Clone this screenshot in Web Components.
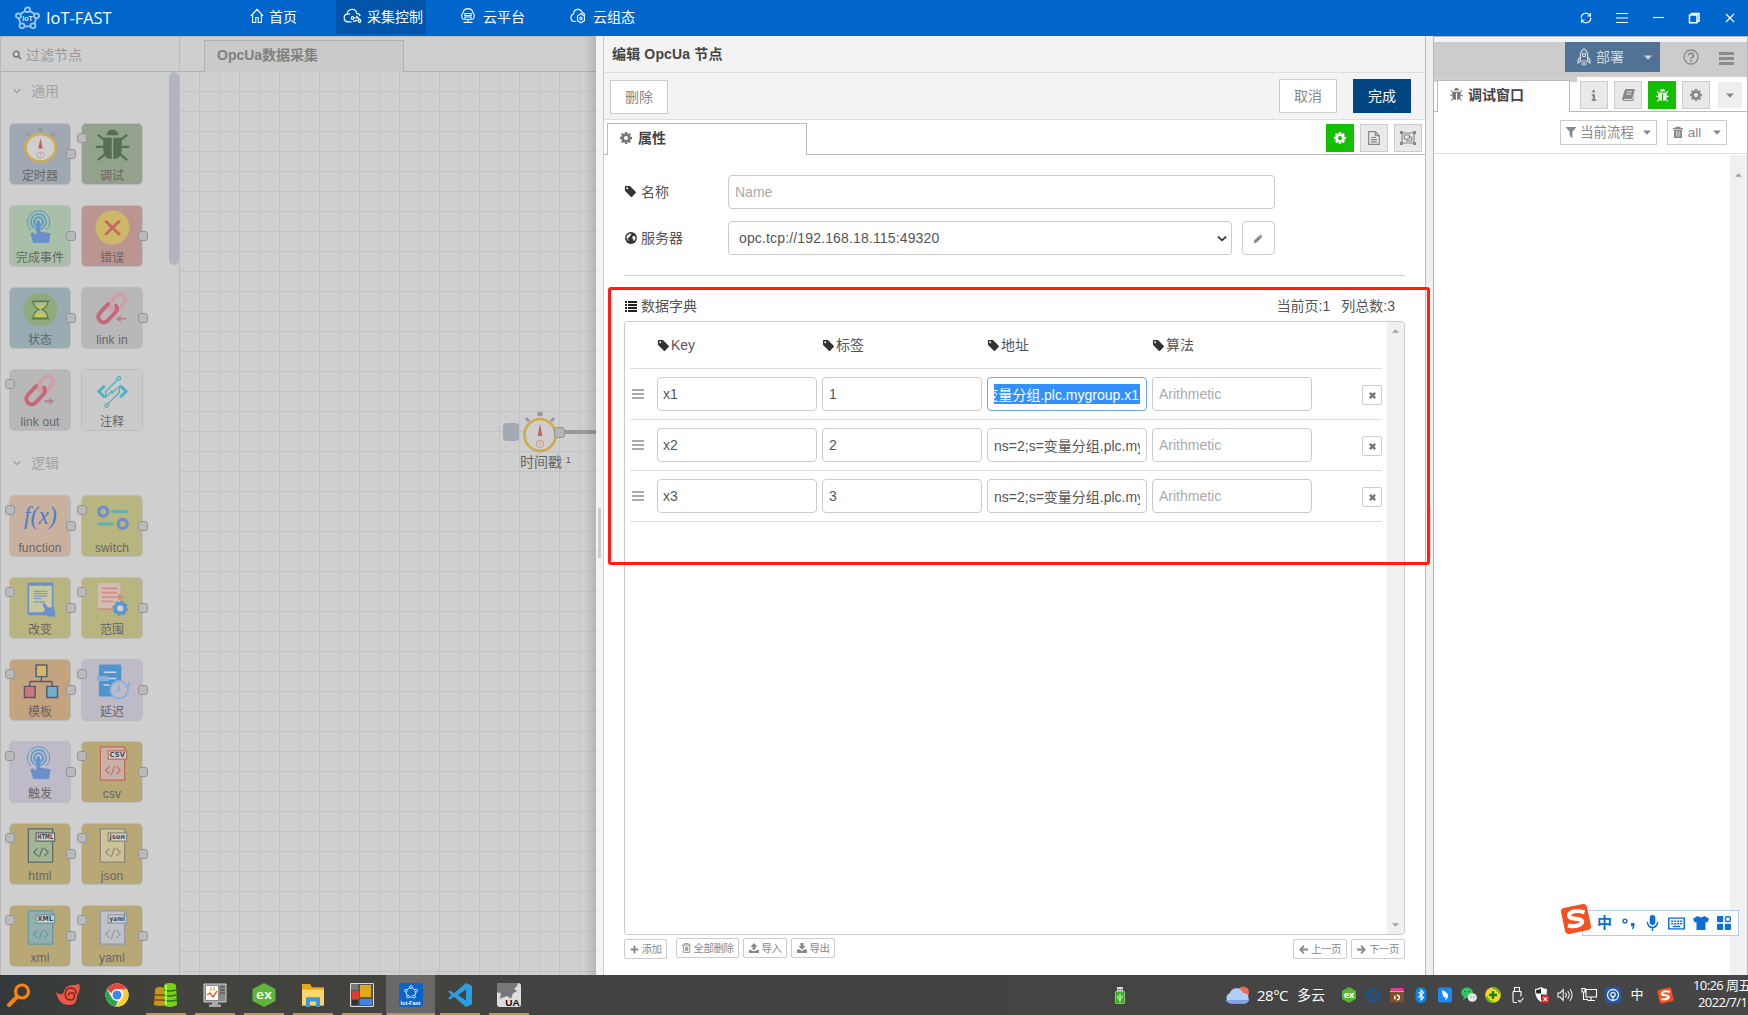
<!DOCTYPE html>
<html lang="zh-CN">
<head>
<meta charset="utf-8">
<title>IoT-FAST</title>
<style>
html,body{margin:0;padding:0}
body{width:1748px;height:1015px;overflow:hidden;background:#fff;font-family:"Liberation Sans","Noto Sans CJK SC",sans-serif;font-size:14px;line-height:20px;color:#555}
</style>
</head>
<body>
<iot-app></iot-app>
<script>
const ICONS = {
  tag:['0 0 1792 1792','<path fill="currentColor" d="M576 448q0-53-37.5-90.5t-90.5-37.5-90.5 37.5-37.5 90.5 37.5 90.5 90.5 37.5 90.5-37.5 37.5-90.5zm1067 576q0 53-37 90l-491 492q-39 37-91 37-53 0-90-37l-715-716q-38-37-64.5-101t-26.5-117v-416q0-52 38-90t90-38h416q53 0 117 26.5t102 64.5l715 714q37 39 37 91z"/>'],
  cog:['128 128 1536 1536','<path fill="currentColor" d="M1152 896q0-106-75-181t-181-75-181 75-75 181 75 181 181 75 181-75 75-181zm512-109v222q0 12-8 23t-20 13l-185 28q-19 54-39 91 35 50 107 138 10 12 10 25t-9 23q-27 37-99 108t-94 71q-12 0-26-9l-138-108q-44 23-91 38-16 136-29 186-7 28-36 28h-222q-14 0-24.5-8.5t-11.5-21.5l-28-184q-49-16-90-37l-141 107q-10 9-25 9-14 0-25-11-126-114-165-168-7-10-7-23 0-12 8-23 15-21 51-66.5t54-70.5q-27-50-41-99l-183-27q-13-2-21-12.5t-8-23.5v-222q0-12 8-23t19-13l186-28q14-46 39-92-40-57-107-138-10-12-10-24 0-10 9-23 26-36 98.5-107.5t94.5-71.5q13 0 26 10l138 107q44-23 91-38 16-136 29-186 7-28 36-28h222q14 0 24.5 8.5t11.5 21.5l28 184q49 16 90 37l142-107q9-9 24-9 13 0 25 10 129 119 165 170 7 8 7 22 0 12-8 23-15 21-51 66.5t-54 70.5q26 50 41 98l183 28q13 2 21 12.5t8 23.5z"/>'],
  bug:['96 64 1600 1600','<path fill="currentColor" d="M1696 960q0 26-19 45t-45 19h-224q0 171-67 290l208 209q19 19 19 45t-19 45q-18 19-45 19t-45-19l-198-197q-5 5-15 13t-42 28.5-65 36.5-82 29-97 13v-896h-128v896q-51 0-101.5-13.5t-87-33-66-39-43.5-32.5l-15-14-183 207q-20 21-48 21-24 0-43-16-19-18-20.5-44.5t15.5-46.5l202-227q-58-114-58-274h-224q-26 0-45-19t-19-45 19-45 45-19h224v-294l-173-173q-19-19-19-45t19-45 45-19 45 19l173 173h844l173-173q19-19 45-19t45 19 19 45-19 45l-173 173v294h224q26 0 45 19t19 45zm-480-576h-640q0-133 93.5-226.5t226.5-93.5 226.5 93.5 93.5 226.5z"/>'],
  filter:['192 256 1408 1408','<path fill="currentColor" d="M1595 295q17 41-14 70l-493 493v742q0 42-39 59-13 5-25 5-27 0-45-19l-256-256q-19-19-19-45v-486l-493-493q-31-29-14-70 17-39 59-39h1280q42 0 59 39z"/>'],
  search:['0 0 12 12','<circle cx="5" cy="5" r="3.4" fill="none" stroke="currentColor" stroke-width="1.8"/><path d="M7.5 7.5 11 11" stroke="currentColor" stroke-width="2"/>'],
  chev:['0 0 8 8','<path d="M.7 2.3 4 5.6 7.3 2.3" fill="none" stroke="currentColor" stroke-width="1.4"/>'],
  caret:['0 0 10 6','<path d="M0 .5h10L5 5.8z" fill="currentColor"/>'],
  caretup:['0 0 10 6','<path d="M0 5.5h10L5 .2z" fill="currentColor"/>'],
  logo:['0 0 26 26','<g fill="none" stroke="#9cc8f5" stroke-width="1.9"><circle cx="13" cy="4" r="2.6"/><circle cx="3.6" cy="10.6" r="2.6"/><circle cx="22.4" cy="10.6" r="2.6"/><circle cx="7.3" cy="21.5" r="2.6"/><circle cx="18.7" cy="21.5" r="2.6"/><path d="M10.6 5.4 5.6 8.7M15.4 5.4l5 3.3M3.8 13.3l2 5.8M22.2 13.3l-2 5.8M10 22.2h6"/></g><text x="13" y="16.3" font-family="Liberation Sans" font-weight="700" font-size="7.4" text-anchor="middle" fill="#d9ecff">IoT</text>'],
  home:['0 0 16 16','<path d="M1 8 8 1.3 15 8M3 6.5v8h3.6v-5h2.8v5H13v-8" fill="none" stroke="currentColor" stroke-width="1.2"/>'],
  cloudlink:['0 0 20 16','<g fill="none" stroke="currentColor" stroke-width="1.2"><path d="M9 13.8H5a4 4 0 0 1-.6-7.9 5.2 5.2 0 0 1 10.200-.6A3.500 3.500 0 0 1 18 8"/><path d="M4.500 6h3"/><circle cx="10" cy="10" r="1.300"/><path d="M11.500 10h4M14 7.800l4 4M10.500 13.400l5-1"/><circle cx="17.500" cy="13" r="1.300"/></g>'],
  cloudsrv:['0 0 18 16','<g fill="none" stroke="currentColor" stroke-width="1.2"><path d="M4 11.500A4 4 0 0 1 3.200 5 6 6 0 0 1 14.800 5a4 4 0 0 1-.8 6.500"/><path d="M5.500 5.500h7v2h-7zM5.500 9h7v2.500h-7zM9 11.500v2M4 14.300h10"/></g>'],
  cloudcfg:['0 0 18 16','<g fill="none" stroke="currentColor" stroke-width="1.2"><path d="M7 13.500H4.500A3.800 3.800 0 0 1 4 6a5 5 0 0 1 9.700-1.300 3.600 3.600 0 0 1 3 3"/><path d="M12.300 5.800 16.200 8v4.600l-3.900 2.200-3.900-2.200V8z"/><circle cx="12.300" cy="10.300" r="1.300"/></g>'],
  refresh:['0 0 12 12','<path d="M1.300 6.500A4.700 4.700 0 0 1 10 3.500M10.700 5.500A4.700 4.700 0 0 1 2 8.500M10.500 1v3h-3M1.500 11V8h3" fill="none" stroke="currentColor" stroke-width="1.100"/>'],
  menu:['0 0 12 12','<path d="M0 1.500h12M0 6h12M0 10.500h12" stroke="currentColor" stroke-width="1.100"/>'],
  min:['0 0 12 12','<path d="M1 5.500h11" stroke="currentColor" stroke-width="1.100"/>'],
  max:['0 0 12 12','<path d="M1.500 3h7.500v7.800H1.500zM3.500 3V1.500h7.500v7.800H9.500" fill="none" stroke="currentColor" stroke-width="1.500"/>'],
  close:['0 0 12 12','<path d="m2 2 8 8M10 2l-8 8" stroke="currentColor" stroke-width="1.100"/>'],
  globe:['0 0 12 12','<circle cx="6" cy="6" r="5.900" fill="currentColor"/><path d="M4.500 1.800 6.500 1.600 6 3 4.800 4l-.3 1.300-1.600.6-.5 1 1.300.8.2 1.500-1.400-1.400L1.400 6l.8-2.500zM8.300 4l1.700.2.600 2.300-1.200 2.200-.8.200-.3-1.700-1-.8.200-1.800z" fill="#fff"/>'],
  list:['0 0 12 11','<path d="M0 1h2M0 4h2M0 7h2M0 10h2M3 1h9M3 4h9M3 7h9M3 10h9" stroke="currentColor" stroke-width="1.900"/>'],
  handle:['0 0 12 10','<path d="M0 1h12M0 5h12M0 9h12" stroke="currentColor" stroke-width="2"/>'],
  bars:['0 0 15 13','<path d="M0 1.500h15M0 6.500h15M0 11.500h15" stroke="currentColor" stroke-width="3"/>'],
  x:['0 0 8 8','<path d="m1 1 6 6M7 1 1 7" stroke="currentColor" stroke-width="2.800"/>'],
  pencil:['0 0 12 12','<path d="M.8 11.200 1.600 8 8 1.600 10.400 4 4 10.400z" fill="currentColor"/><path d="m7 3 2.300 2.300" stroke="#fff" stroke-width=".7"/>'],
  file:['0 0 12 14','<path d="M.7.700h6.600l4 4v8.600H.7zM7.300.700v4h4M3 6.500h5M3 8.700h6M3 10.900h6" fill="none" stroke="currentColor" stroke-width="1.200"/>'],
  group:['0 0 16 14','<g fill="none" stroke="currentColor" stroke-width="1.200"><path d="M2 2h12v10H2zM4.300 4h5v4h-5z"/><path d="M9.300 6h2.400v4H7V8"/></g><path d="M0 0h3v3H0zM13 0h3v3h-3zM0 11h3v3H0zM13 11h3v3h-3z" fill="currentColor"/>'],
  info:['0 0 8 12','<path d="M2 0h3v3H2zM1 4.500h4.300V10H7v2H1v-2h1.300V6.500H1z" fill="currentColor"/>'],
  book:['0 0 14 12','<path d="M4.500 0h8.300q1.200.3.900 1.500L11.300 9q-.4 1-1.300 1H2.500q-.7.300-.3.900h8.600q1 0 1.300-.8l1.700-5.600-1.300 7q-.4.500-1.300.5H2Q-.2 11.500.3 9L3 1Q3.500 0 4.500 0z" fill="currentColor"/><path d="M5.300 2.700h5.500M4.600 5h5.500" stroke="#eee" stroke-width=".9"/>'],
  question:['0 0 16 16','<circle cx="8" cy="8" r="7" fill="none" stroke="currentColor" stroke-width="1.300"/><path d="M5.600 6.500a2.400 2.300 0 1 1 3.600 2q-1.200.6-1.200 1.500" fill="none" stroke="currentColor" stroke-width="1.900"/><path d="M7 11h2v1.800H7z" fill="currentColor"/>'],
  rocket:['0 0 14 18','<g fill="none" stroke="currentColor" stroke-width="1.200"><path d="M7 1q4 2.500 3.600 7.500v4.500H3.400V8.500Q3 3.500 7 1z"/><circle cx="7" cy="7" r="1.700"/><path d="M3.400 8.500 1 12v3l2.400-2M10.600 8.500 13 12v3l-2.400-2M5 14.500V17M7 14v4M9 14.500V17"/></g>'],
  trash:['0 0 10 12','<path d="M0 1.800h10M3 1.500V.5h4v1" stroke="currentColor" stroke-width="1.300" fill="none"/><path d="M1 3h8v9H1z" fill="currentColor"/><path d="M3.500 4.500v6M5 4.500v6M6.700 4.500v6" stroke="#fff" stroke-width=".6"/>'],
  trasho:['0 0 10 12','<path d="M0 2.500h10M3 2.500V.7h4v1.800M1.500 2.500v8.800h7V2.500M3.700 4.500v5M5 4.500v5M6.300 4.500v5" stroke="currentColor" stroke-width="1" fill="none"/>'],
  plus:['0 0 10 10','<path d="M5 .8v8.400M.8 5h8.400" stroke="currentColor" stroke-width="2.200"/>'],
  up:['0 0 10 10','<path d="M5 0 8.500 3.800h-2v3h-3v-3h-2z" fill="currentColor"/><path d="M0 7h2.800v1h4.400V7H10v3H0z" fill="currentColor"/>'],
  down:['0 0 10 10','<path d="M3.500 0h3v3h2L5 6.800 1.500 3h2z" fill="currentColor"/><path d="M0 6.500h2.800l2.200 1.700 2.200-1.700H10V10H0z" fill="currentColor"/>'],
  left:['0 0 10 10','<path d="M5.500.8 1.500 5l4 4.200M1.500 5H10" fill="none" stroke="currentColor" stroke-width="2"/>'],
  right:['0 0 10 10','<path d="M4.500.8 8.500 5l-4 4.200M8.500 5H0" fill="none" stroke="currentColor" stroke-width="2"/>'],

  clock:['0 0 36 40','<path d="M15.500 0h5v4h-5z" fill="#999"/><path d="m4 6 3 3M32 6l-3 3" stroke="#999" stroke-width="3"/><circle cx="18" cy="22.500" r="15.500" fill="#cfcfcf" stroke="#ceac52" stroke-width="2.800"/><path d="m18 11.500 2.300 12h-4.600z" fill="#c7605c"/><circle cx="18" cy="31" r="3.500" fill="none" stroke="#d09a98"/><path d="M18 28.500v3" stroke="#d09a98"/>'],
  bugBig:['0 0 36 36','<g fill="#566f50"><path d="M12 7.500a6 6 0 0 1 12 0z"/><path d="M8.500 10h8.700v22q-8.700 0-8.700-10zM27.500 10h-8.700v22q8.700 0 8.700-10z"/></g><path d="m3 7 6.500 5M33 7l-6.500 5M.8 19.500H9M27 19.500h8.200M3 33l7-6M33 33l-7-6" stroke="#566f50" stroke-width="2.300"/>'],
  touch:['0 0 36 36','<g fill="none" stroke="#569bca"><circle cx="16" cy="12" r="4.500" stroke-width="2"/><circle cx="16" cy="12" r="7.800" stroke-width="1.500"/><path d="M8 20.500a11.500 11.500 0 1 1 16 0" stroke-width="1"/></g><path d="M13.700 12.500a2 2 0 0 1 4 0V22l10.600 2-1.600 10H10.500L7.500 24l3-1 3.200 3z" fill="#6a8fca"/>'],
  error:['0 0 36 36','<circle cx="18" cy="18" r="17.500" fill="#cdb868"/><path d="m10.500 11 15 14.500M25.500 11l-15 14.500" stroke="#c96462" stroke-width="2.900"/>'],
  hourglass:['0 0 36 36','<circle cx="18" cy="18" r="17.500" fill="#8fab7c"/><path d="M10.500 10h15q0 5-6 8 6 3 6 8h-15q0-5 6-8-6-3-6-8z" fill="#a9bd8d" stroke="#5c7b4f" stroke-width="1.200"/><path d="M9 9.500h18M9 27.500h18" stroke="#5c7b4f" stroke-width="1.600"/><path d="M13 14.500h10l-5 3zM12 26q1-4 6-4t6 4z" fill="#c9cb4e"/>'],
  linkin:['0 0 36 36','<g fill="none" stroke-linejoin="round" stroke-width="4"><rect x="-5.500" y="-9" width="11" height="18" rx="5.500" transform="translate(23.500 10.500) rotate(38)" stroke="#d0a0a8"/><path d="m13.500 12.500-8 8.500q-4 4.500-.5 8.500 4 3.500 8 0l8.500-9q2.500-3 0-6.500" stroke="#c5697a" stroke-linecap="round"/></g><path d="M32 27.500h-6" stroke="#b98088" stroke-width="2"/><path d="m21.500 27.500 5-3.500v7z" fill="#b98088"/>'],
  linkout:['0 0 36 36','<g fill="none" stroke-linejoin="round" stroke-width="4"><rect x="-5.500" y="-9" width="11" height="18" rx="5.500" transform="translate(23.500 10.500) rotate(38)" stroke="#d0a0a8"/><path d="m13.500 12.500-8 8.500q-4 4.500-.5 8.500 4 3.500 8 0l8.500-9q2.500-3 0-6.500" stroke="#c5697a" stroke-linecap="round"/></g><path d="M22 28h6" stroke="#b98088" stroke-width="2"/><path d="m32 28-5-3.500v7z" fill="#b98088"/>'],
  comment:['0 0 36 36','<g fill="none" stroke="#4eb0c0"><path d="M10 12 4 18l6 6M26 12l6 6-6 6" stroke-width="3"/><path d="m23 6-12 12v6l7-7M13 31l12-12v-6l-8 7" stroke-width="1.300"/><circle cx="24.500" cy="4.500" r="1.800" stroke-width="1.300"/><circle cx="12" cy="32.500" r="1.800" stroke-width="1.300"/></g>'],
  fx:['0 0 36 36','<text x="18" y="25" font-family="Liberation Serif" font-style="italic" font-size="25" text-anchor="middle" fill="#4f7fc5" textLength="34" lengthAdjust="spacingAndGlyphs">f(x)</text>'],
  switch:['0 0 36 36','<g fill="none"><circle cx="8.500" cy="12" r="4.600" stroke="#7090c4" stroke-width="3.400"/><circle cx="28.500" cy="24.500" r="4.600" stroke="#7090c4" stroke-width="3.400"/><path d="M18 12h14M4 24.500h14" stroke="#62b3a4" stroke-width="3.400" stroke-linecap="round"/></g>'],
  change:['0 0 36 36','<rect x="5.500" y="1.500" width="25" height="32" rx="1.500" fill="#c8c89c" stroke="#6b8fcb" stroke-width="1.600"/><path d="M5 2.300h26M5 32.500h18" stroke="#6b8fcb" stroke-width="3"/><path d="M11 9.500h14M11 12h14M11 14.500h14M11 17h8" stroke="#6b8fcb"/><path d="M11 20.500h12" stroke="#6b8fcb" stroke-width="1.500" stroke-dasharray="2 1"/><path d="m20 22.500 2-1 4 5 5-1 2 4v6h-7l-6-5 3-1z" fill="#6b8fcb"/>'],
  range:['0 0 36 36','<path d="M3 1h23v28H3z" fill="#d0bdb7"/><path d="M7 6.500h16M7 11h16M7 15.500h12M19 15.500h7M7 20h12M3 28h17" stroke="#d2907c" stroke-width="1.800"/><path d="m24 11.500 6 4-6 4z" fill="#d2907c"/><circle cx="26" cy="27" r="5" fill="#cfcfcf" stroke="#5b98cc" stroke-width="3.600"/><circle cx="26" cy="27" r="7" fill="none" stroke="#5b98cc" stroke-width="2" stroke-dasharray="3 2.500"/>'],
  template:['0 0 36 36','<g stroke="#59596f" stroke-width="1.500"><path d="M19 12.500V18M7 24v-5q0-1 1-1h21q1 0 1 1v5" fill="none"/><path d="M13.500 1h11v12h-11z" fill="#cfb96c"/><path d="M1.500 23h11v11.500h-11z" fill="#c97778"/><path d="M24.500 23h11v11.500h-11z" fill="#73add0"/></g>'],
  delay:['0 0 36 36','<rect x="4" y=".5" width="23" height="33" rx="1.500" fill="#5094cf"/><path d="M9 8.500h13M12 15h10M9 21.500h6" stroke="#c6d6e4" stroke-width="1.500"/><path d="M2 12.500h12v5H2z" fill="#87b3d9"/><circle cx="25" cy="26.500" r="9" fill="#bfbac7" stroke="#87b3d9" stroke-width="2"/><path d="M25 21v6h-4M31 23h4v-5" fill="none" stroke="#87b3d9" stroke-width="1.800"/>'],
  star:['0 0 26 26','<g fill="none" stroke="#cfe4ff" stroke-width="1.800"><circle cx="13" cy="4" r="2.600"/><circle cx="3.600" cy="10.600" r="2.600"/><circle cx="22.400" cy="10.600" r="2.600"/><circle cx="7.300" cy="21.500" r="2.600"/><circle cx="18.700" cy="21.500" r="2.600"/><path d="M10.600 5.400 5.600 8.700M15.400 5.400l5 3.300M3.800 13.300l2 5.800M22.200 13.300l-2 5.800M10 22.200h6"/></g>'],

  tSearch:['0 0 24 24','<circle cx="15" cy="8.500" r="6.500" fill="none" stroke="#f98311" stroke-width="3.200"/><path d="m10.500 13.500-8.500 8.500" stroke="#f98311" stroke-width="4" stroke-linecap="round"/>'],
  tSnail:['0 0 26 24','<path d="M0 9q5 4 8 1 2-8 10-8 6 0 7-2 2 8-2 12 0 10-9 10Q3 22 0 9z" fill="#e55a49"/><path d="M22 11q0-6-6-6t-6 6 6 6q4 0 4-4t-4-3q-3 0-2 3" fill="none" stroke="#8f211c" stroke-width="1.600"/>'],
  tChrome:['0 0 24 24','<circle cx="12" cy="12" r="11.500" fill="#fff"/><path d="M12 .5A11.500 11.500 0 0 1 22 6.300H12A5.700 5.700 0 0 0 6.500 10.400L2 6.200A11.500 11.500 0 0 1 12 .5z" fill="#e2493b"/><path d="M2 6.200 7.100 15a5.700 5.700 0 0 0 6.300 2.500l-3 6A11.500 11.500 0 0 1 2 6.200z" fill="#31a350"/><path d="M22 6.300a11.500 11.500 0 0 1-11.600 17.100L17 14.900a5.700 5.700 0 0 0-1.500-8.600z" fill="#fccd33"/><circle cx="12" cy="12" r="5.700" fill="#fff"/><circle cx="12" cy="12" r="4.500" fill="#4284ed"/>'],
  tDb:['0 0 24 24','<path d="M1 7q0-3 5-3t5 3v15q-5 2-11 0z" fill="#c99418"/><path d="M0 12h11M0 17h11" stroke="#7b4e10" stroke-width="1.500"/><path d="M10 3q0-3 6-3t6 3l1 19q-7 4-14 0z" fill="#78d21b"/><path d="M10 7q6 2 12 0M9 12q7 2 13 0M9 17q7 2 14 0" stroke="#287609" stroke-width="1.500" fill="none"/><path d="M12 2v20" stroke="#c1ff55" stroke-width="1.500"/>'],
  tMon:['0 0 24 24','<path d="M1 1h22v18H1z" fill="#8a8a8a" stroke="#cfcfcf"/><path d="M3 3h12v14H3z" fill="#fff"/><path d="m4 12 3-2 3 4 4-6" stroke="#dd6125" stroke-width="1.400" fill="none"/><path d="M8 4v4M11 4v4" stroke="#b9a100"/><path d="M17 4h5M17 7h5M17 10h5" stroke="#444"/><path d="M9 19h6v3H9zM6 21.500h12V24H6z" fill="#aaa"/>'],
  tEx:['0 0 24 26','<path d="M12 0 23.500 6.500v13L12 26 .5 19.500v-13z" fill="#5fb53a"/><text x="12" y="17" font-family="Open Sans" font-weight="600" font-size="14" fill="#fff" text-anchor="middle">ex</text>'],
  tFolder:['0 0 24 22','<path d="M1 1h8l2 3h12v17H1z" fill="#e9a61d"/><path d="M1 6h22v14H1z" fill="#fcd56d"/><path d="M5 13h14v9h-4v-5H9v5H5z" fill="#3b97dc"/>'],
  tBlocks:['0 0 24 24','<path d="M.5.500h23v23H.5z" fill="#555" stroke="#d8d8d8"/><path d="M1 1h7v6H1z" fill="#777"/><path d="M2 8h7v8H2z" fill="#df3a35"/><path d="M10 2h11v12H10z" fill="#e0a91d"/><path d="M10 16h12v6H10z" fill="#4184e8"/><path d="M2 17h6v5H2z" fill="#333"/>'],
  tCode:['0 0 24 26','<path d="M18 0 6 11 2 8 0 9l3.500 4L0 17l2 1 4-3 12 11 6-3V3zm0 7v12l-8-6z" fill="#2c9fe3"/>'],
  tUA:['0 0 24 26','<rect width="24" height="26" rx="3" fill="#ddd"/><path d="M0 3q0-3 3-3h18q-1 5-4 6l3 3-4 2-2 6-4-3-7 3 1-6-4-1z" fill="#777"/><text x="15.500" y="24.500" font-family="Liberation Sans" font-weight="700" font-size="10" fill="#111" text-anchor="middle">UA</text>'],
  usb:['0 0 12 18','<path d="M2.500 0h7v5h-7z" fill="#ddd"/><path d="M4 2h1.500v1.500H4zM7 2h1.500v1.500H7z" fill="#333"/><rect x=".5" y="4.500" width="11" height="13" rx="1" fill="#35b31c" stroke="#d7ffd0" stroke-width=".6"/><path d="M6 7v9M3.500 9v3L6 14M8.500 9v2L6 13" stroke="#fff" fill="none"/>'],
  weather:['0 0 26 18','<circle cx="19" cy="6.500" r="6" fill="#f06c4b"/><path d="M6 17.500A5.500 5.500 0 0 1 5 7a7.500 7.500 0 0 1 14 0 5.400 5.400 0 0 1 2 10.500z" fill="#b3cdf5"/><path d="M6 17.500Q2 17 .7 14H25q-1 3-4 3.500z" fill="#7ba4e6"/>'],
  sEx:['0 0 16 16','<path d="m8 0 7 4v8l-7 4-7-4V4z" fill="#58b531"/><text x="8" y="11" font-family="Open Sans" font-weight="700" font-size="9" fill="#fff" text-anchor="middle">ex</text>'],
  sBox:['0 0 16 16','<rect x="1" y="1" width="14" height="14.500" rx="1.500" fill="#7d4f2b"/><path d="M2 1h12v3H2z" fill="#e33a92"/><path d="M1 4.500h14" stroke="#d5b08c"/><circle cx="8" cy="10.500" r="2.300" fill="none" stroke="#fff" stroke-width="1.400" stroke-dasharray="3.500 1.300"/>'],
  sBt:['0 0 16 16','<rect x="2.500" width="11" height="16" rx="5.500" fill="#0a84e4"/><path d="m5.500 5 5 5.500L8 13V3l2.500 2.500-5 5" fill="none" stroke="#fff" stroke-width="1.100"/>'],
  sBird:['0 0 16 16','<rect x="1" y=".5" width="14" height="15" rx="2.500" fill="#1789f2"/><path d="M5 3q7 3 6 7l-3 4 1-4-2 .5q-2-3-2-7.500z" fill="#fff"/>'],
  sWe:['0 0 16 16','<ellipse cx="6" cy="5.500" rx="5.800" ry="5" fill="#38c466"/><path d="m2 13 1-4 3 1z" fill="#38c466"/><circle cx="4" cy="4.500" r=".8" fill="#163"/><circle cx="8" cy="4.500" r=".8" fill="#163"/><ellipse cx="11.300" cy="10.500" rx="4.600" ry="4.200" fill="#e7e7e7"/><circle cx="10" cy="10" r=".6" fill="#555"/><circle cx="13" cy="10" r=".6" fill="#555"/>'],
  sPlus:['0 0 16 16','<circle cx="8" cy="8" r="7.800" fill="#f9d915"/><path d="M8 0a8 8 0 0 1 7.500 6l-2 1A6 6 0 0 0 7 2zM8 16a8 8 0 0 1-7.500-6l2-1A6 6 0 0 0 9 14z" fill="#60b926"/><path d="M8 4v8M4 8h8" stroke="#197a31" stroke-width="2.400"/>'],
  sUsb:['0 0 16 16','<path d="M5.500.500h5v4h-5zM4 4.500h8v5M4 4.500v9.500q0 1.500 1.500 1.500H8M9 13l2 2 3.500-4" fill="none" stroke="#fff" stroke-width="1.100"/>'],
  sShield:['0 0 16 16','<path d="M8 0q3 2 6 2 0 10-6 13Q2 12 2 2q3 0 6-2z" fill="#fff"/><path d="M8 1.500v5H3.500Q3 5 3 3q2.500 0 5-1.500zM8 7.500h4.500Q11.500 11.500 8 13.500z" fill="#222"/><rect x="8.500" y="8" width="7.500" height="8" rx="2" fill="#df2b2b"/><path d="m10.500 10.300 3.600 3.600M14 10.300l-3.500 3.600" stroke="#fff" stroke-width="1.100"/>'],
  sSound:['0 0 18 16','<path d="M1 6h2.500L7 2.500v11L3.500 10H1zM9.500 5.500q2 2.500 0 5M12 4q3.500 4 0 8M14.500 2q5 6 0 12" fill="none" stroke="#fff" stroke-width="1.100"/>'],
  sNet:['0 0 16 16','<path d="M5 2.500h10.500v7.500H5zM10 10v3M6.500 13.500H14M1 1.500h3v3.500H1zM2.500 5v7.500H7" fill="none" stroke="#fff" stroke-width="1.100"/>'],
  sLock:['0 0 16 16','<rect width="16" height="16" rx="3" fill="#2459a8"/><circle cx="8" cy="8" r="5.500" fill="none" stroke="#e4eefb" stroke-width="1.300"/><circle cx="8" cy="7.500" r="2.200" fill="#2459a8" stroke="#e4eefb" stroke-width="1.300"/><path d="M8 9v4" stroke="#e4eefb" stroke-width="1.500"/>'],
  sStar:['0 0 26 26','<g fill="none" stroke="#125ba5" stroke-width="1.900"><circle cx="13" cy="4" r="2.600"/><circle cx="3.600" cy="10.600" r="2.600"/><circle cx="22.400" cy="10.600" r="2.600"/><circle cx="7.300" cy="21.500" r="2.600"/><circle cx="18.700" cy="21.500" r="2.600"/><path d="M10.600 5.400 5.600 8.700M15.400 5.400l5 3.300M3.800 13.300l2 5.800M22.200 13.300l-2 5.800M10 22.200h6M10 11h6M13 11v6"/></g>'],
  sogou:['0 0 32 32','<rect x="2.800" y="2.800" width="26.400" height="26.400" rx="3.500" fill="#f4511e" transform="rotate(-12 16 16)"/><path d="M24.500 9.500Q17 6.500 11 9.500 7 12.500 11 15l9 1.500q4 2 .5 4.700Q15 24.500 8 22.500" fill="none" stroke="#fff" stroke-width="4.200"/>'],
  punct:['0 0 16 16','<circle cx="4" cy="6" r="1.900" fill="none" stroke="#0b6fd6" stroke-width="1.400"/><path d="M10 8h3.500v3q0 2.500-2.500 3.500v-1.500q.8-.5.800-1.700H10z" fill="#0b6fd6"/>'],
  mic:['0 0 16 16','<rect x="5" width="6" height="10" rx="3" fill="#0b6fd6"/><path d="M2.500 7a5.500 5.500 0 0 0 11 0M8 12.500V16" fill="none" stroke="#0b6fd6" stroke-width="1.600"/>'],
  kbd:['0 0 16 14','<rect x=".7" y="1.200" width="14.600" height="11.600" fill="none" stroke="#0b6fd6" stroke-width="1.400"/><path d="M3 4.500h10.500M3 7.200h10.500" stroke="#0b6fd6" stroke-width="1.600" stroke-dasharray="2 .8"/><path d="M4.500 10.200h7" stroke="#0b6fd6" stroke-width="1.600"/>'],
  shirt:['0 0 16 15','<path d="M4.500 0q3.500 3 7 0L16 3l-1.500 4-2-.5V15h-9V6.500l-2 .5L0 3z" fill="#0b6fd6"/>'],
  grid4:['0 0 14 14','<g fill="#0b6fd6"><rect width="6.200" height="6.200" rx="1"/><rect y="7.800" width="6.200" height="6.200" rx="1"/><rect x="7.800" y="7.800" width="6.200" height="6.200" rx="1"/></g><rect x="8.500" y=".7" width="4.800" height="4.800" rx="1.500" fill="none" stroke="#0b6fd6" stroke-width="1.400"/>']
};
// File-type glyph shared by the parser nodes
const doc = (label, line, fill) => ['0 0 36 36', `<path d="M5.500 1h25v34h-25z" fill="${fill}" stroke="${line}" stroke-width="1.300"/><path d="M13.500 5h19v8.500h-19z" fill="#cfcfcf" stroke="${line}" stroke-width="1.200"/><text x="23" y="11.800" font-family="DejaVu Sans" font-weight="700" font-size="7" text-anchor="middle" fill="#444" textLength="16" lengthAdjust="spacingAndGlyphs">${label}</text><path d="m15 21-4 4 4 4M22 21l4 4-4 4M20.300 20l-3.600 10" fill="none" stroke="${line}" stroke-width="1.200"/>`];
ICONS.csv = doc('CSV', '#c06c5e', '#c9b1a9');
ICONS.html = doc('HTML', '#5f6a68', '#a2b595');
ICONS.json = doc('json', '#8d8878', '#cdc298');
ICONS.xml = doc('XML', '#68979b', '#92b0b0');
ICONS.yaml = doc('yaml', '#9498a5', '#bfc2c8');

function define(name, css, render) {
  customElements.define(name, class extends HTMLElement {
    constructor() { super(); this.attachShadow({ mode: 'open' }); }
    connectedCallback() {
      this.shadowRoot.innerHTML = `<style>*{box-sizing:border-box}:host{box-sizing:border-box}${css}</style>` + render(this);
    }
  });
}
const a = (el, n, d = '') => el.getAttribute(n) ?? d;
const icon = (n, w, h = w, c = '') => `<ui-icon name="${n}" w="${w}" h="${h}"${c ? ` style="color:${c}"` : ''}></ui-icon>`;

define('ui-icon', ':host{display:inline-block;flex:none;line-height:0}svg{display:block;overflow:visible}', el => {
  const [box, body] = ICONS[a(el, 'name')];
  return `<svg width="${a(el, 'w')}" height="${a(el, 'h')}" viewBox="${box}" preserveAspectRatio="none">${body}</svg>`;
});

define('nav-item', `:host{display:flex;align-items:center;height:34px;color:#fff;padding:0 4px 1px 7px;gap:5px}
ui-icon{margin-bottom:2px}
:host([active]){background:#0055aa}`, el => icon(a(el, 'icon'), a(el, 'w'), 16) + '<slot></slot>');

define('app-header', `:host{display:flex;height:36px;background:#0066cc;color:#fff;align-items:flex-start}
.brand{display:flex;align-items:center;gap:6px;height:36px;width:243px;padding-left:15px;font:17px/24px "Open Sans","Noto Sans",sans-serif}
.brand span{display:block;transform:scaleX(.965);transform-origin:left;padding-bottom:1px}
nav{display:flex}.win{margin-left:auto;display:flex;gap:24px;height:36px;align-items:center;padding-right:12px}
.a{width:93px}.b{width:90px;padding-right:0}.c{margin-left:27px;width:83px;gap:7px}.d{margin-left:27px;gap:7px}`, () => `
<div class="brand">${icon('logo', 25, 24)}<span>IoT-FAST</span></div>
<nav><nav-item class="a" icon="home" w="14">首页</nav-item><nav-item class="b" active icon="cloudlink" w="19">采集控制</nav-item><nav-item class="c" icon="cloudsrv" w="16">云平台</nav-item><nav-item class="d" icon="cloudcfg" w="16">云组态</nav-item></nav>
<div class="win">${['refresh', 'menu', 'min', 'max', 'close'].map(n => icon(n, 12)).join('')}</div>`);

define('palette-node', `:host{display:block;position:relative;width:62px;height:62px;border:1px solid #bdbdbd;border-radius:5px;background:var(--c)}
.col{display:flex;flex-direction:column;align-items:center;padding-top:4px;gap:5px;font-size:12px;line-height:16px;color:#666;white-space:nowrap}
.latin{letter-spacing:.15px}
i{position:absolute;width:10px;height:10px;border:1px solid #959595;border-radius:3px;background:#bababa}
.in{left:-5px;top:9px}.out{right:-6px;top:25px}`, el => {
  const p = a(el, 'ports'), latin = /^[a-z]/.test(a(el, 'label'));
  return `<div class="col${latin ? ' latin' : ''}">${icon(a(el, 'icon'), 35)}<span>${a(el, 'label')}</span></div>${p.includes('i') ? '<i class="in"></i>' : ''}${p.includes('o') ? '<i class="out"></i>' : ''}`;
});

define('palette-category', `:host{display:block}
.h{display:flex;align-items:center;height:38px;padding-left:12px;gap:10px;color:#a3a3a3;margin-bottom:13px}
.g{display:grid;grid-template-columns:62px 62px;gap:20px 10px;padding-left:8px;margin-bottom:13px}`, el =>
  `<div class="h">${icon('chev', 8)}<span>${a(el, 'label')}</span></div><div class="g"><slot></slot></div>`);

const node = (icn, label, c, ports) => `<palette-node icon="${icn}" label="${label}" ports="${ports}" style="--c:${c}"></palette-node>`;
define('node-palette', `:host{display:flex;flex-direction:column;width:180px;height:939px;background:#cfcfcf;border-left:1px solid #b9b9b9;border-right:1px solid #bbb;border-top:1px solid #bbb;overflow:hidden}
.s{flex:none;display:flex;align-items:center;height:35px;padding:2px 0 0 11px;gap:4px;color:#999;border-bottom:1px solid #b0b0b0}
.s ui-icon{color:#777}.body{display:flex;align-items:flex-start;justify-content:space-between}
.bar{width:10px;height:193px;border-radius:5px;background:#b1b5bf}`, () => `
<div class="s">${icon('search', 10)}<span>过滤节点</span></div>
<div class="body"><div>
<palette-category label="通用">${node('clock', '定时器', '#a0a8b3', 'o')}${node('bugBig', '调试', '#92a28d', 'i')}${node('touch', '完成事件', '#a9bfa8', 'o')}${node('error', '错误', '#bb9591', 'o')}${node('hourglass', '状态', '#98acb3', 'o')}${node('linkin', 'link in', '#b8b8b8', 'o')}${node('linkout', 'link out', '#b8b8b8', 'i')}${node('comment', '注释', '#cacaca', '')}</palette-category>
<palette-category label="逻辑">${node('fx', 'function', '#c8b19e', 'io')}${node('switch', 'switch', '#b9b580', 'io')}${node('change', '改变', '#b9b580', 'io')}${node('range', '范围', '#b9b580', 'io')}${node('template', '模板', '#c3a47e', 'io')}${node('delay', '延迟', '#bfbac7', 'io')}${node('touch', '触发', '#bfbac7', 'io')}${node('csv', 'csv', '#b8a876', 'io')}${node('html', 'html', '#b8a876', 'io')}${node('json', 'json', '#b8a876', 'io')}${node('xml', 'xml', '#b8a876', 'io')}${node('yaml', 'yaml', '#b8a876', 'io')}</palette-category>
</div><div class="bar"></div></div>`);

define('flow-canvas', `:host{display:flex;flex-direction:column;position:relative;width:416px;height:939px;background:#cfcfcf;overflow:hidden;border-top:1px solid #bbb}
.tabs{flex:none;height:35px;display:flex;padding:3px 0 0 24px;border-bottom:1px solid #b0b0b0}
.tab{width:200px;height:32px;border:1px solid #b0b0b0;border-bottom:0;background:#c9cbca;font-weight:700;color:#808080;padding:4px 0 0 12px}
.grid{flex:1;position:relative;background:repeating-linear-gradient(90deg,transparent 0 19px,#c3c3c3 19px 20px),repeating-linear-gradient(transparent 0 19px,#c3c3c3 19px 20px)}
.btn,.clk,.port,.wire,.lbl{position:absolute}
.btn{left:323px;top:351px;width:16px;height:18px;border-radius:4px;background:#a2abb5}
.clk{left:342px;top:340px}.wire{left:380px;top:358px;width:36px;height:4px;background:#999}
.port{left:374px;top:355px;width:11px;height:11px;border:1px solid #959595;border-radius:3px;background:#b6b6b6}
.lbl{left:340px;top:380px;color:#666;white-space:pre}
.shade{position:absolute;right:0;top:0;bottom:0;width:12px;background:linear-gradient(90deg,transparent,rgba(0,0,0,.12))}`, () => `
<div class="tabs"><div class="tab">OpcUa数据采集</div></div>
<div class="grid"><div class="btn"></div><div class="clk">${icon('clock', 36, 41)}</div><div class="wire"></div><div class="port"></div><div class="lbl">时间戳 ¹</div></div><div class="shade"></div>`);

define('pane-separator', `:host{display:flex;align-items:center;justify-content:center;width:7px;height:939px;background:var(--c,#f3f3f3);padding-top:55px}
i{width:3px;height:50px;background:#ccc}`, () => '<i></i>');

define('ui-button', `:host{display:flex;align-items:center;justify-content:center;gap:5px;border:1px solid #ccc;background:#fff;color:#888;white-space:nowrap;flex:none}
:host([primary]){background:#00457f;border-color:#00457f;color:#fff}
:host([on]){background:#12c000!important;border-color:#12c000!important;color:#fff!important}
:host([small]){height:20px;border-radius:2px;font-size:10.500px;letter-spacing:-.5px;gap:3px}
:host([sq]){width:28px;height:28px;background:#e9e9e9}`, () => '<slot></slot>');

define('text-box', `:host{display:flex;align-items:center;height:34px;border:1px solid #ccc;border-radius:4px;background:#fff;padding:0 6px;color:#555;overflow:hidden}
:host([hint]){color:#aaa}:host([focus]){border-color:#6ea5ea}
div{flex:1;overflow:hidden;white-space:nowrap;display:flex;align-items:center}
:host([focus]) div{justify-content:flex-end;background:#3390ff;color:#fff;padding-right:1px}`, () => '<div><slot></slot></div>');

define('dict-row', `:host{display:grid;grid-template-columns:27px repeat(4,160px) 1fr;column-gap:0;height:51px;border-bottom:1px solid #ddd;padding-top:8px;align-items:start}
text-box{width:160px}.h{height:34px;display:flex;align-items:center;padding-left:2px}
.r{display:grid;grid-template-columns:repeat(4,160px);gap:5px;grid-column:2/6;width:655px}.x{justify-self:end;width:20px;height:20px;border-radius:2px;margin-top:8px}
.ad{flex:none;padding-top:1px;margin-bottom:-1px}`, el => {
  const focus = el.hasAttribute('focus');
  return `
<div class="h">${icon('handle', 12, 10, '#aaa')}</div>
<div class="r"><text-box style="padding-left:5px">x${a(el, 'n')}</text-box><text-box>${a(el, 'n')}</text-box><text-box${focus ? ' focus' : ''}><span class="ad">${focus ? '变量分组.plc.mygroup.x1' : 'ns=2;s=变量分组.plc.my'}</span></text-box><text-box hint>Arithmetic</text-box></div>
<ui-button class="x">${icon('x', 7, 7, '#777')}</ui-button>`;
});

define('dict-list', `:host{display:flex;height:614px;border:1px solid #ccc;border-radius:4px;overflow:hidden}
.rows{width:757px;padding-left:5px}.head{display:grid;grid-template-columns:repeat(4,165px);padding-left:27px;height:47px;align-items:center;border-bottom:1px solid #ddd}
.head span{display:flex;align-items:center;gap:1px}.bar{margin-left:5px;flex:1;background:#f0f0f0;display:flex;flex-direction:column;justify-content:space-between;align-items:center;padding:7px 0;color:#a0a0a0}`, () => `
<div class="rows"><div class="head">${['Key', '标签', '地址', '算法'].map(t => `<span>${icon('tag', 13, 13, '#333')}${t}</span>`).join('')}</div>
<dict-row n="1" focus></dict-row><dict-row n="2"></dict-row><dict-row n="3"></dict-row></div>
<div class="bar">${icon('caretup', 7, 4)}${icon('caret', 7, 4)}</div>`);

define('edit-tray', `:host{display:flex;flex-direction:column;position:relative;width:823px;height:939px;border-left:1px solid #ccc;border-right:1px solid #bbbcc0;background:#fff}
header{height:37px;background:#f3f3f3;border-bottom:1px solid #ddd;padding:8px 0 0 8px;font-weight:700;color:#444;letter-spacing:.15px}
.tools{height:47px;background:#f3f3f3;border-bottom:1px solid #ddd;display:flex;align-items:center;padding:0 14px 0 6px}
.tools ui-button{width:58px;height:34px}.sp{flex:1}
.tabs{height:35px;border-bottom:1px solid #bbb;display:flex;align-items:center;padding:2px 3px 0;gap:6px}
.tab{width:200px;height:32px;align-self:flex-start;margin-top:1px;border:1px solid #bbb;border-bottom:0;background:#fff;display:flex;align-items:center;gap:6px;padding:0 0 4px 12px;font-weight:700;color:#444}
.body{padding:20px 20px 0;display:flex;flex-direction:column}
.row{display:flex;align-items:center;margin-bottom:12px;height:34px}
.l{width:104px;display:flex;align-items:center;gap:4px;padding-bottom:1px}.hr{height:1px;background:#ccc;margin:8px 0 20px}
.cap{display:flex;height:20px;margin-bottom:5px;align-items:center;gap:4px;padding-left:1px}.cap .n{margin-left:auto;padding-right:10px;display:flex;gap:11px}
.foot{display:flex;margin-top:3px;align-items:flex-start}
.red{position:absolute;left:4px;top:251px;width:822px;height:278px;border:3px solid #ff1e10;border-radius:3px;z-index:2}
.sel{width:504px;padding:0 0 0 10px;letter-spacing:.15px}`, () => `
<header>编辑 OpcUa 节点</header>
<div class="tools"><ui-button style="margin-top:1px">删除</ui-button><div class="sp"></div><ui-button style="margin-right:16px">取消</ui-button><ui-button primary>完成</ui-button></div>
<div class="tabs"><div class="tab">${icon('cog', 12, 12, '#777')}<span>属性</span></div><div class="sp"></div><ui-button sq on>${icon('cog', 12)}</ui-button><ui-button sq>${icon('file', 12, 14)}</ui-button><ui-button sq>${icon('group', 16, 14)}</ui-button></div>
<div class="body">
<div class="row"><div class="l">${icon('tag', 13, 13, '#333')}名称</div><text-box hint style="width:547px">Name</text-box></div>
<div class="row"><div class="l" style="padding-left:1px">${icon('globe', 12, 12, '#333')}服务器</div><text-box class="sel"><span style="flex:1">opc.tcp://192.168.18.115:49320</span><span style="display:flex;padding-right:4px">${icon('chev', 10, 9, '#333')}</span></text-box><ui-button style="width:33px;height:34px;margin-left:10px;border-radius:4px">${icon('pencil', 11)}</ui-button></div>
<div class="hr"></div>
<div class="cap">${icon('list', 12, 11, '#222')}<span>数据字典</span><div class="n"><span>当前页:1</span><span>列总数:3</span></div></div>
<dict-list></dict-list>
<div class="foot"><ui-button small style="width:43px;margin-top:1px">${icon('plus', 9)}添加</ui-button><ui-button small style="width:63px;margin-left:9px">${icon('trasho', 9, 10)}全部删除</ui-button><ui-button small style="width:44px;margin-left:4px">${icon('up', 10)}导入</ui-button><ui-button small style="width:44px;margin-left:4px">${icon('down', 10)}导出</ui-button><div class="sp"></div><ui-button small style="width:54px;margin-top:1px">${icon('left', 9)}上一页</ui-button><ui-button small style="width:54px;margin:1px 0 0 4px">${icon('right', 9)}下一页</ui-button></div>
</div><div class="red"></div>`);

define('debug-sidebar', `:host{display:flex;flex-direction:column;width:315px;height:939px;border:1px solid #b5b6ba;border-bottom:0;background:#fff}
.top{height:40px;border-top:5px solid #f3f3f3;background:#cbcccb;display:flex;align-items:flex-start;color:#8c8c8c}
.dep{width:95px;height:30px;margin-left:131px;background:#507395;color:#cfd6dc;display:flex;align-items:center;padding-left:12px}
.tabs{height:35px;display:flex;border-bottom:1px solid #bbb;padding-left:3px;background:linear-gradient(#cfcfcf,#cfcfcf) 0 0/143px 5px no-repeat}
.tab{width:133px;height:32px;margin-top:3px;border:1px solid #bbb;border-bottom:0;background:#fff;display:flex;align-items:center;gap:5px;padding:0 0 4px 12px;font-weight:700;color:#444}
.bt{display:flex;gap:6px;margin:4px 0 0 10px}
.f{height:42px;border-bottom:1px solid #ddd;display:flex;justify-content:flex-end;gap:10px;padding:8px 20px 0 0}
.f ui-button{height:25px;font-size:13.400px}.main{flex:1;display:flex;justify-content:flex-end;padding-top:1px}.bar{width:17px;background:#f0f0f0;padding:7px 5px;color:#a0a0a0}`, () => `
<div class="top"><div class="dep">${icon('rocket', 14, 18)}<span style="margin:0 20px 0 5px">部署</span>${icon('caret', 8, 5)}</div><div style="margin:7px 0 0 23px">${icon('question', 16)}</div><div style="margin:8px 0 0 20px">${icon('bars', 15, 13)}</div></div>
<div class="tabs"><div class="tab">${icon('bug', 13, 13, '#777')}<span>调试窗口</span></div><div class="bt"><ui-button sq>${icon('info', 6, 11)}</ui-button><ui-button sq>${icon('book', 13, 12)}</ui-button><ui-button sq on>${icon('bug', 13)}</ui-button><ui-button sq>${icon('cog', 12)}</ui-button><ui-button sq style="border-color:transparent;margin-left:1px;width:26px;background:#eee;background-clip:padding-box">${icon('caret', 8, 5)}</ui-button></div></div>
<div class="f"><ui-button style="width:97px;gap:4px">${icon('filter', 10, 11)}当前流程<span style="width:1px"></span>${icon('caret', 8, 5)}</ui-button><ui-button style="width:60px">${icon('trash', 10, 11)}all<span style="width:2px"></span>${icon('caret', 8, 5)}</ui-button></div>
<div class="main"><div class="bar">${icon('caretup', 7, 4)}</div></div>`);

define('task-item', `:host{display:flex;flex-direction:column;align-items:center;width:49px;height:40px;flex:none}
.i{height:38px;display:flex;align-items:center;justify-content:center;padding-top:2px}
u{width:40px;height:2px;background:#b9985a}:host([active]){background:#686868}:host([active]) u{width:48px}
.app{width:24px;height:24px;border-radius:3px;background:#0c64c9;display:flex;flex-direction:column;align-items:center;padding-top:2px;color:#fff;font:700 5.500px/6px "Liberation Sans"}`, el => `
<div class="i">${a(el, 'icon') === 'app' ? `<div class="app">${icon('star', 14)}<span style="margin-top:1px">Iot-Fast</span></div>` : icon(a(el, 'icon'), 24)}</div>${el.hasAttribute('run') ? '<u></u>' : ''}`);

define('task-bar', `:host{display:flex;height:40px;width:1748px;overflow:hidden;background:linear-gradient(90deg,#34383a 0,#43433d 180px,#424242 700px,#464646);color:#fff}
.l{display:flex;margin-left:-6px;flex:none}.w{display:flex;flex:none;align-items:center;white-space:nowrap;font:15px/20px "Open Sans","Noto Sans CJK SC",sans-serif}
.t{display:flex;align-items:center;flex:none}.t span{width:24px;flex:none;display:flex;justify-content:center}
.c{flex:none;font:13px/17px "Open Sans","Noto Sans CJK SC",sans-serif;white-space:nowrap;padding-top:2px;margin-left:12px;letter-spacing:-.6px}`, () => `
<div class="l">${['tSearch', 'tSnail', 'tChrome', 'tDb', 'tMon', 'tEx', 'tFolder', 'tBlocks', 'app', 'tCode', 'tUA'].map((n, i) => `<task-item icon="${n}"${i > 2 ? ' run' : ''}${n === 'app' ? ' active' : ''}></task-item>`).join('')}</div>
<div class="w" style="margin-left:582px">${icon('usb', 10, 17)}</div>
<div class="w" style="margin-left:100px;width:112px">${icon('weather', 25, 18)}<span style="margin:0 9px 0 7px;letter-spacing:-.5px">28°C</span><span style="font-size:14px">多云</span></div>
<div class="t">${['sEx', 'sStar', 'sBox', 'sBt', 'sBird', 'sWe', 'sPlus', 'sUsb', 'sShield', 'sSound', 'sNet', 'sLock'].map(n => `<span>${icon(n, 16)}</span>`).join('')}<span style="font-size:13px">中</span><span style="width:32px">${icon('sogou', 17)}</span></div>
<div class="c">10:26 周五<br><span style="margin-left:5px">2022/7/1</span></div>`);

define('ime-bar', `:host{display:flex;position:absolute;left:1560px;top:907px;width:179px;height:32px;align-items:center}
.b{margin-left:-10px;flex:1;height:26px;border:1px solid #b4cdea;background:#fff;display:flex;align-items:center;gap:8px;padding-left:14px}
.s{position:relative;z-index:1;margin-top:-3px}b{font-size:15px;color:#0b6fd6;width:16px}`, () => `
<div class="s">${icon('sogou', 32)}</div><div class="b"><b>中</b>${icon('punct', 16)}${icon('mic', 15, 16)}${icon('kbd', 17, 13)}${icon('shirt', 16, 14)}${icon('grid4', 14)}</div>`);

define('iot-app', `:host{display:flex;flex-direction:column;width:1748px;height:1015px;position:relative}
main{display:flex;height:939px}`, () => `
<app-header></app-header>
<main><node-palette></node-palette><flow-canvas></flow-canvas><pane-separator></pane-separator><edit-tray></edit-tray><pane-separator style="--c:#eeeff1"></pane-separator><debug-sidebar></debug-sidebar></main>
<task-bar></task-bar><ime-bar></ime-bar>`);
</script>
</body>
</html>
